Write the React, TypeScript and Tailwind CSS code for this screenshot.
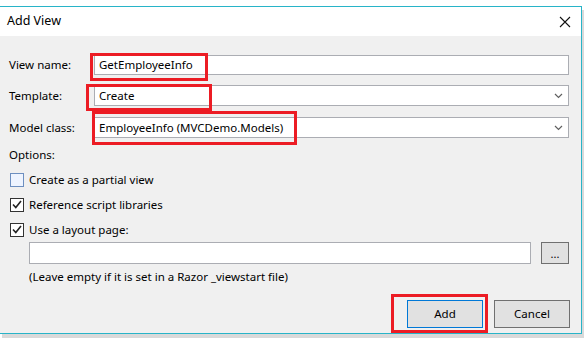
import type { ReactNode } from "react";

const font = { fontFamily: '"Noto Sans", "Liberation Sans", sans-serif' };

function Chevron() {
  return (
    <svg width="9" height="6" viewBox="0 0 9 6" className="text-[#606060]">
      <polyline points="1,1 4.5,4.5 8,1" fill="none" stroke="currentColor" strokeWidth="1.2" />
    </svg>
  );
}

function Field({ label, children, className }: { label: string; children: ReactNode; className?: string }) {
  return (
    <div className={`flex items-center pl-[9px] pr-[12px] ${className ?? ""}`}>
      <span className="w-[85px] shrink-0">{label}</span>
      {children}
    </div>
  );
}

function Check({ checked, hover, label }: { checked?: boolean; hover?: boolean; label: string }) {
  return (
    <div className="flex h-[25px] items-center pl-[10px]">
      <span
        className={`flex h-[14px] w-[14px] items-center justify-center border ${
          hover ? "border-[#6d8fc0] bg-[#eef4ff]" : "border-[#333] bg-white"
        }`}
      >
        {checked ? (
          <svg width="10" height="9" viewBox="0 0 10 9">
            <polyline points="1,4.5 3.8,7.5 9,1" fill="none" stroke="#222" strokeWidth="1.6" />
          </svg>
        ) : null}
      </span>
      <span className="ml-[5px]">{label}</span>
    </div>
  );
}

function RedBox({ className }: { className: string }) {
  return <div className={`pointer-events-none absolute border-[3px] border-[#ec1c24] ${className}`} />;
}

export default function App() {
  return (
    <div className="relative h-[338px] w-[584px] overflow-hidden bg-white text-[11.5px] text-black" style={font}>
      <div className="ml-[-1px] mt-[6px] flex h-[328px] w-[583px] flex-col border border-[#28b4c8] shadow-[3px_4px_0_#d9d9d9]">
        {/* title bar */}
        <div className="flex h-[29px] shrink-0 items-center justify-between bg-white pl-[7px] pr-[10px]">
          <span className="text-[12.5px]">Add View</span>
          <svg width="12" height="12" viewBox="0 0 12 12">
            <path d="M1 1 L11 11 M11 1 L1 11" stroke="#111" strokeWidth="1.1" />
          </svg>
        </div>

        {/* body */}
        <div className="flex flex-1 flex-col bg-[#f0f0f0] pt-[19px]">
          <Field label="View name:">
            <div className="flex h-[20px] flex-1 items-center border border-[#abadb3] bg-white pl-[4px]">
              GetEmployeeInfo
            </div>
          </Field>
          <Field label="Template:" className="mt-[10px]">
            <div className="flex h-[21px] flex-1 items-center justify-between border border-[#abadb3] bg-white pl-[4px] pr-[5px]">
              Create
              <Chevron />
            </div>
          </Field>
          <Field label="Model class:" className="mt-[11px]">
            <div className="flex h-[21px] flex-1 items-center justify-between border border-[#abadb3] bg-white pl-[4px] pr-[5px]">
              EmployeeInfo (MVCDemo.Models)
              <Chevron />
            </div>
          </Field>

          <div className="mt-[8px] pl-[9px] leading-[18px]">Options:</div>
          <div className="mt-[3px] flex flex-col">
            <Check hover label="Create as a partial view" />
            <Check checked label="Reference script libraries" />
            <Check checked label="Use a layout page:" />
          </div>

          <div className="flex items-center gap-[10px] pl-[29px] pr-[12px]">
            <div className="h-[22px] flex-1 border border-[#abadb3] bg-white" />
            <div className="flex h-[22px] w-[28px] items-center justify-center border border-[#707070] bg-[#e1e1e1] text-[11px] leading-none">
              ...
            </div>
          </div>
          <div className="mt-[4px] pl-[29px] leading-[18px]">
            (Leave empty if it is set in a Razor _viewstart file)
          </div>

          <div className="mt-[14px] flex justify-end gap-[11px] pr-[11px]">
            <div className="flex h-[28px] w-[76px] items-center justify-center border border-[#0078d7] bg-[#e1e1e1]">
              Add
            </div>
            <div className="flex h-[28px] w-[76px] items-center justify-center border border-[#707070] bg-[#e1e1e1]">
              Cancel
            </div>
          </div>
        </div>
      </div>

      {/* annotation boxes */}
      <RedBox className="left-[90px] top-[53px] h-[28px] w-[118px]" />
      <RedBox className="left-[86px] top-[84px] h-[27px] w-[126px]" />
      <RedBox className="left-[92px] top-[111px] h-[34px] w-[205px]" />
      <RedBox className="left-[391px] top-[294px] h-[39px] w-[97px]" />
    </div>
  );
}
